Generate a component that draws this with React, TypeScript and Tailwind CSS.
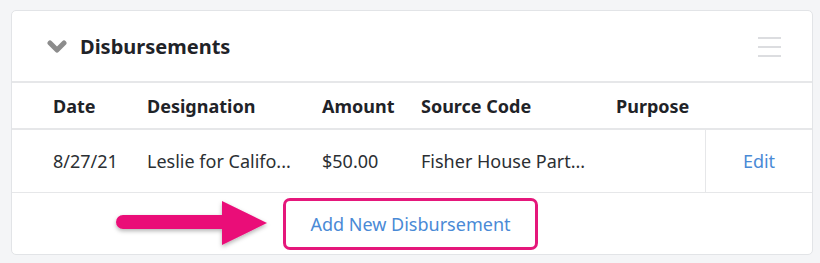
import React from 'react';

const columns = ['Date', 'Designation', 'Amount', 'Source Code', 'Purpose'];

const row = {
  date: '8/27/21',
  designation: 'Leslie for Califo...',
  amount: '$50.00',
  sourceCode: 'Fisher House Part...',
  purpose: '',
};

const App = () => {
  return (
    <div
      className="min-h-screen bg-[#f4f5f7] pt-[10px] pl-[11px] pr-[7px]"
      style={{ fontFamily: '"Noto Sans", "Open Sans", Arial, sans-serif' }}
    >
      <div className="relative w-[802px] h-[245px] bg-white border border-[#e2e4e7] rounded-[5px] overflow-hidden">
        {/* Header */}
        <div className="h-[72px] flex items-center justify-between pl-[35px] pr-[31px] pt-[2px] border-b-2 border-[#e6e7e9]">
          <div className="flex items-center gap-[13px]">
            <svg width="20" height="14" viewBox="0 0 20 14">
              <polyline
                points="3,3 10,10 17,3"
                fill="none"
                stroke="#8c8c8c"
                strokeWidth="5"
                strokeLinecap="round"
                strokeLinejoin="round"
              />
            </svg>
            <h2 className="text-[20px] font-bold text-[#1f2328] leading-none">Disbursements</h2>
          </div>
          <div className="flex flex-col gap-[7px]">
            <span className="block w-[23px] h-[2px] bg-[#dcdde0]"></span>
            <span className="block w-[23px] h-[2px] bg-[#dcdde0]"></span>
            <span className="block w-[23px] h-[2px] bg-[#dcdde0]"></span>
          </div>
        </div>

        {/* Table head */}
        <div className="h-[47px] flex items-center pl-[41px] pt-[1px] border-b-2 border-[#e6e7e9] text-[18px] font-bold text-[#1f2328]">
          <div className="w-[94px]">{columns[0]}</div>
          <div className="w-[175px]">{columns[1]}</div>
          <div className="w-[99px]">{columns[2]}</div>
          <div className="w-[195px]">{columns[3]}</div>
          <div className="w-[89px]">{columns[4]}</div>
        </div>

        {/* Table row */}
        <div className="h-[63px] flex items-stretch pl-[41px] border-b border-[#e6e7e9] text-[18px] text-[#2b2f33]">
          <div className="w-[94px] flex items-center">{row.date}</div>
          <div className="w-[175px] flex items-center">{row.designation}</div>
          <div className="w-[99px] flex items-center">{row.amount}</div>
          <div className="w-[195px] flex items-center">{row.sourceCode}</div>
          <div className="w-[89px] flex items-center">{row.purpose}</div>
          <div className="flex-1 flex items-center justify-center border-l border-[#e6e7e9] text-[#4a8ad6]">
            Edit
          </div>
        </div>

        {/* Footer */}
        <div className="h-[61px] flex items-start justify-center pt-[5px] pr-[3px]">
          <button className="w-[255px] h-[52px] border-[3px] border-[#e5177b] rounded-[7px] text-[18px] text-[#4a8ad6]">
            Add New Disbursement
          </button>
        </div>

        {/* Annotation arrow */}
        <svg
          className="absolute left-[88px] top-[186px]"
          width="180"
          height="60"
          viewBox="0 0 180 60"
        >
          <defs>
            <filter id="shadow" x="-10%" y="-20%" width="120%" height="160%">
              <feDropShadow dx="0" dy="2" stdDeviation="2" floodColor="#000" floodOpacity="0.3" />
            </filter>
          </defs>
          <g filter="url(#shadow)">
            <line x1="23" y1="25" x2="130" y2="25" stroke="#ea0b78" strokeWidth="14" strokeLinecap="round" />
            <polygon points="122,4 167,26 122,48" fill="#ea0b78" />
          </g>
        </svg>
      </div>
    </div>
  );
};

export default App;
